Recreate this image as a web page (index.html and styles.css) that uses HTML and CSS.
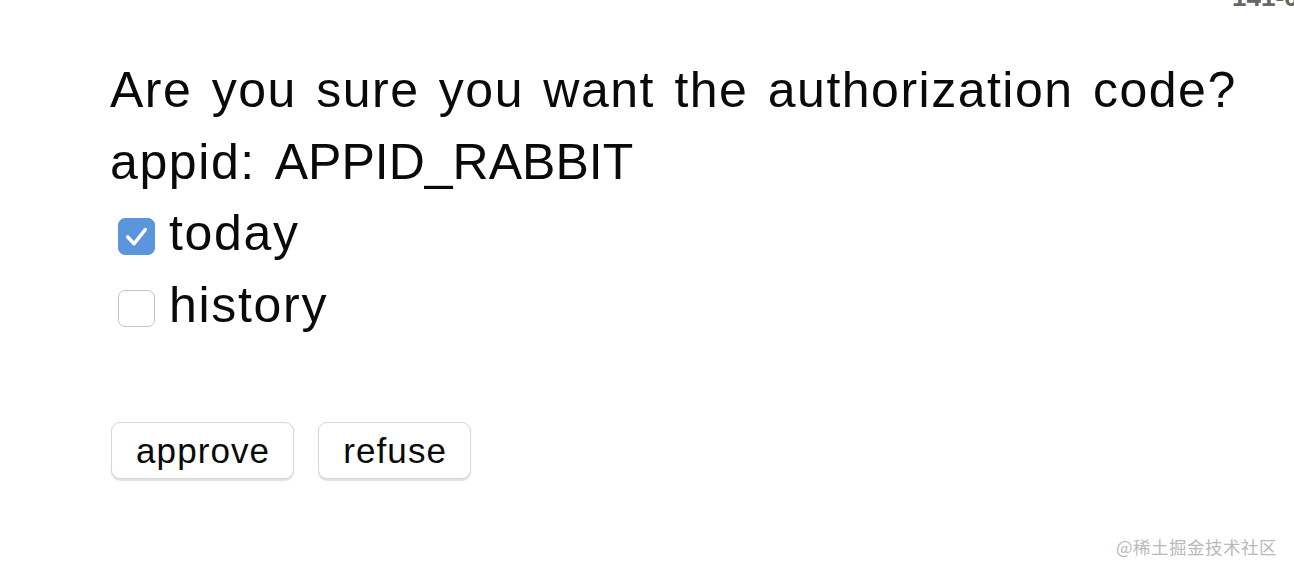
FILE: index.html
```html
<!DOCTYPE html>
<html lang="en">
<head>
<meta charset="utf-8">
<title>Authorize</title>
<link rel="stylesheet" href="styles.css">
</head>
<body>
<div class="corner">141-0</div>
<main class="page">
  <p class="line question">Are you sure you want the authorization code?</p>
  <p class="line appid"><span class="key">appid:</span> <span class="value">APPID_RABBIT</span></p>
  <label class="line option">
    <span class="box checked"><svg viewBox="0 0 38 38" width="37" height="37"><path d="M10 20.5 L16.5 27.5 L28 13" fill="none" stroke="#fff" stroke-width="3.6" stroke-linecap="round" stroke-linejoin="round"/></svg></span>
    <span class="label">today</span>
  </label>
  <label class="line option">
    <span class="box"></span>
    <span class="label">history</span>
  </label>
  <div class="actions">
    <button class="btn approve">approve</button>
    <button class="btn refuse">refuse</button>
  </div>
</main>
<div class="watermark">@稀土掘金技术社区</div>
</body>
</html>
```
FILE: styles.css
```css
html, body {
  margin: 0;
  padding: 0;
  background: #fff;
  width: 1294px;
  height: 576px;
  overflow: hidden;
  position: relative;
  font-family: "Liberation Sans", Arial, "Noto Sans CJK SC", sans-serif;
  color: #0a0a0a;
}

.page {
  padding: 54px 0 0 110px;
  display: flex;
  flex-direction: column;
  align-items: flex-start;
}

.line {
  margin: 0;
  font-size: 50px;
  line-height: 72px;
  height: 72px;
  white-space: nowrap;
}

.question {
  letter-spacing: 1.5px;
  word-spacing: 4px;
}

.appid .key {
  letter-spacing: 1.6px;
}

.appid .value {
  margin-left: 5px;
}

.option {
  display: flex;
  align-items: center;
  padding-left: 8px;
  gap: 14px;
}

.option .label {
  letter-spacing: 1.7px;
  position: relative;
  top: -1px;
}

.box {
  width: 37px;
  height: 37px;
  box-sizing: border-box;
  border-radius: 7px;
  border: 1.5px solid #c8c3bb;
  background: #fff;
  display: flex;
  flex: none;
  position: relative;
  top: 2px;
}

.box.checked {
  background: #5b95dc;
  border-color: #5b95dc;
}

.box svg {
  display: block;
  margin: -1.5px;
}

.actions {
  display: flex;
  gap: 24px;
  margin-top: 80px;
  padding-left: 1px;
}

.btn {
  font-family: "Liberation Sans", Arial, sans-serif;
  font-size: 35px;
  letter-spacing: 1.1px;
  color: #0a0a0a;
  height: 57px;
  padding: 0 23px 0 24px;
  background: #fff;
  border: 1px solid #d6d6d6;
  border-radius: 9px;
  box-shadow: 0 1.5px 1px rgba(0, 0, 0, 0.12);
  line-height: 1;
}

.corner {
  position: absolute;
  top: -18px;
  left: 1232px;
  font-size: 26px;
  font-weight: bold;
  color: #666;
  white-space: nowrap;
}

.watermark {
  position: absolute;
  left: 1116px;
  top: 536px;
  font-family: "Noto Sans CJK SC", sans-serif;
  font-size: 17.5px;
  letter-spacing: 0.5px;
  line-height: 22px;
  color: #b9b9b9;
  white-space: nowrap;
}
```
